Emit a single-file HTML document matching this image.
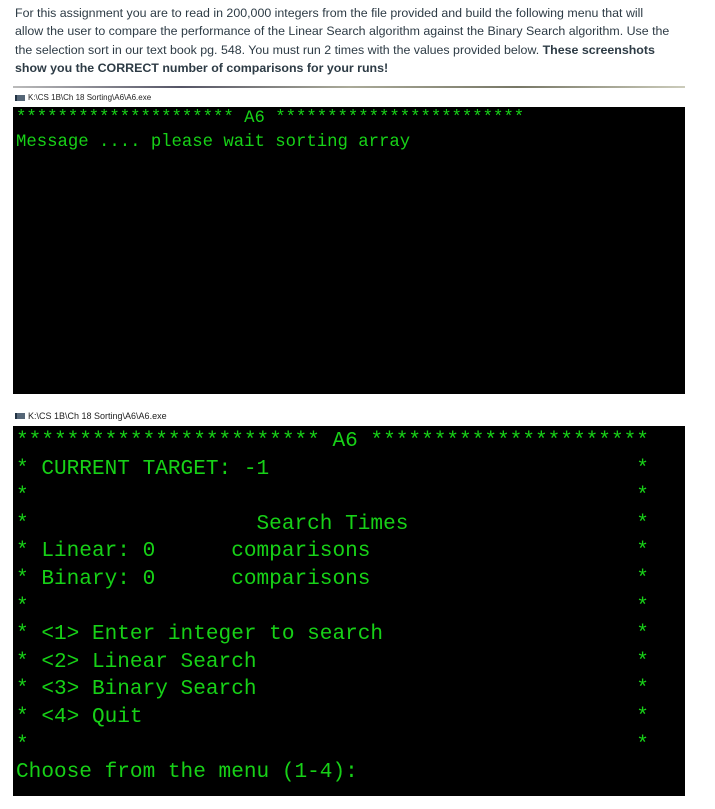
<!DOCTYPE html>
<html><head><meta charset="utf-8"><style>
body{margin:0;background:#fff;width:715px;height:809px;overflow:hidden;position:relative;font-family:"Liberation Sans",sans-serif}
.p{position:absolute;left:15px;top:4px;width:700px;font-size:12.4px;line-height:18.3px;color:#2d3b45;white-space:nowrap}
.t{position:absolute;left:15px;font-size:8px;color:#222;display:flex;align-items:center;gap:3px}
.t i{display:inline-block;width:8px;height:6px;background:#567;border-left:2px solid #234}
.c{position:absolute;left:13px;width:672px;background:#000;color:#17d117;font-family:"Liberation Mono","DejaVu Sans Mono",monospace;white-space:pre;overflow:hidden}
.c1{top:107px;height:287px;font-size:17.3px;line-height:24px;padding-left:3px;box-sizing:border-box}
.c2{top:426px;height:370px;font-size:21.1px;line-height:27.6px;padding-left:3px;padding-top:2px;box-sizing:border-box}
.bar{position:absolute;left:13px;top:86px;width:672px;height:2px;background:linear-gradient(90deg,#bbb,#556,#aa9,#776,#ccb)}
</style></head><body>
<div class="p">For this assignment you are to read in 200,000 integers from the file provided and build the following menu that will<br>allow the user to compare the performance of the Linear Search algorithm against the Binary Search algorithm. Use the<br>the selection sort in our text book pg. 548. You must run 2 times with the values provided below. <b>These screenshots</b><br><b>show you the CORRECT number of comparisons for your runs!</b></div>
<div class="bar"></div>
<div class="t" style="top:93px"><i></i>K:\CS 1B\Ch 18 Sorting\A6\A6.exe</div>
<div class="c c1">********************* A6 ************************
Message .... please wait sorting array</div>
<div class="t" style="top:411px;font-size:9px"><i></i>K:\CS 1B\Ch 18 Sorting\A6\A6.exe</div>
<div class="c c2">************************ A6 **********************
* CURRENT TARGET: -1                             *
*                                                *
*                  Search Times                  *
* Linear: 0      comparisons                     *
* Binary: 0      comparisons                     *
*                                                *
* &lt;1&gt; Enter integer to search                    *
* &lt;2&gt; Linear Search                              *
* &lt;3&gt; Binary Search                              *
* &lt;4&gt; Quit                                       *
*                                                *
Choose from the menu (1-4):</div>
</body></html>
